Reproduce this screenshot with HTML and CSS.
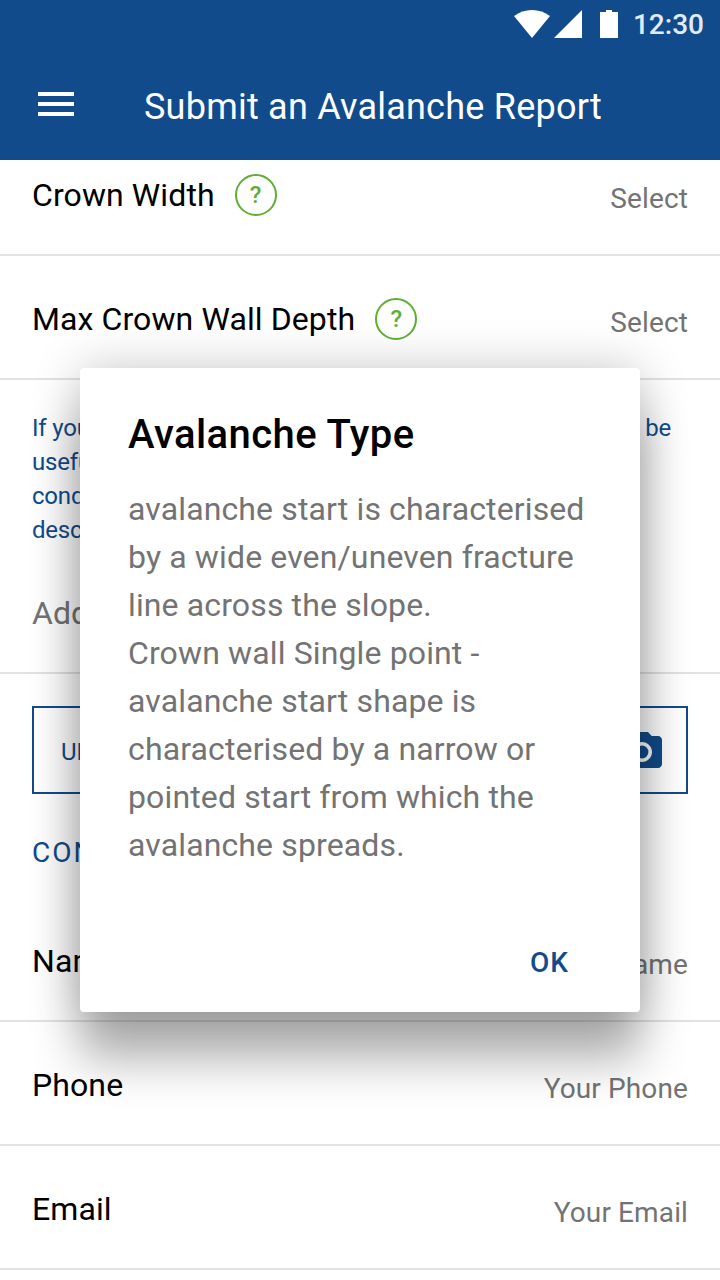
FILE: index.html
```html
<!DOCTYPE html>
<html lang="en">
<head>
<meta charset="utf-8">
<title>Submit an Avalanche Report</title>
<link rel="stylesheet" href="styles.css">
</head>
<body>
<div class="screen">
  <header class="header">
    <div class="status">
      <svg class="status-icons" width="104" height="28" viewBox="0 0 104 28" fill="#fff">
        <path d="M0 6Q8 0 18 0T36 6L18 28Z"/>
        <path d="M68 0V28H40Z"/>
        <path d="M92 0h6v2h6v26H86V2h6Z"/>
      </svg>
      <span class="clock">12:30</span>
    </div>
    <div class="appbar">
      <svg class="menu" width="36" height="24" viewBox="0 0 36 24" fill="#fff">
        <path d="M0 0h36v4H0zM0 10h36v4H0zM0 20h36v4H0z"/>
      </svg>
      <h1 class="title">Submit an Avalanche Report</h1>
    </div>
  </header>
  <main class="form">
    <div class="row row-first"><span class="label">Crown Width</span><span class="help">?</span><span class="value">Select</span></div>
    <div class="row"><span class="label">Max Crown Wall Depth</span><span class="help">?</span><span class="value">Select</span></div>
    <div class="note">
      <div class="hint"><span>If you<br>useful<br>cond<br>desc</span><span class="hint-end">be</span></div>
      <div class="add">Add</div>
    </div>
    <div class="upload">
      <span>UPLOAD</span>
      <svg width="48" height="48" viewBox="0 0 24 24" fill="#114b8b">
        <circle cx="12" cy="12" r="3.2"/>
        <path d="M9 2L7.17 4H4c-1.1 0-2 .9-2 2v12c0 1.1.9 2 2 2h16c1.1 0 2-.9 2-2V6c0-1.1-.9-2-2-2h-3.17L15 2H9zm3 15c-2.76 0-5-2.24-5-5s2.24-5 5-5 5 2.24 5 5-2.24 5-5 5z"/>
      </svg>
    </div>
    <h2 class="section">CONTACT</h2>
    <div class="row"><span class="label">Name</span><span class="value">Your Name</span></div>
    <div class="row"><span class="label">Phone</span><span class="value">Your Phone</span></div>
    <div class="row"><span class="label">Email</span><span class="value">Your Email</span></div>
  </main>
  <div class="dialog" role="dialog">
    <h2 class="dialog-title">Avalanche Type</h2>
    <p class="dialog-text">avalanche start is characterised<br>by a wide even/uneven fracture<br>line across the slope.<br>Crown wall Single point -<br>avalanche start shape is<br>characterised by a narrow or<br>pointed start from which the<br>avalanche spreads.</p>
    <div class="actions"><button class="ok">OK</button></div>
  </div>
</div>
</body>
</html>
```
FILE: styles.css
```css
* { box-sizing: border-box; }
body { margin: 0; font-family: Roboto, sans-serif; background: #fff; }
h1, h2, p { margin: 0; font-weight: 400; }
.screen { position: relative; width: 720px; height: 1280px; overflow: hidden; background: #fff; }

.header { height: 160px; background: #114b8b; color: #fff; }
.status { height: 48px; display: flex; justify-content: flex-end; align-items: center; padding-right: 16px; }
.clock { margin-left: 15px; padding-top: 2px; font-size: 28px; font-weight: 500; line-height: 46px; color: #e1ecfb; }
.appbar { height: 112px; display: flex; align-items: center; padding-left: 38px; }
.menu { margin-right: 70px; }
.title { font-size: 36px; line-height: 48px; letter-spacing: 0.23px; padding-top: 6px; }

.row { height: 124px; display: flex; align-items: center; padding: 4px 32px 0; border-bottom: 2px solid #e2e2e2; }
.row-first { height: 96px; padding: 0 32px 24px; }
.label { font-size: 32px; line-height: 40px; color: #000; letter-spacing: 0.1px; }
.help { width: 42px; height: 42px; margin-left: 20px; border: 2px solid #5fae33; border-radius: 50%; color: #5fae33; font-size: 24px; font-weight: 500; line-height: 38px; text-align: center; }
.value { margin-left: auto; padding-top: 8px; font-size: 28px; line-height: 36px; color: #737373; letter-spacing: 0.12px; }

.note { height: 294px; padding: 31px 32px 0; border-bottom: 2px solid #e2e2e2; }
.hint { display: flex; justify-content: space-between; font-size: 24px; line-height: 34px; letter-spacing: -0.2px; color: #114b8b; }
.hint-end { padding-right: 17px; }
.add { margin-top: 46px; font-size: 32px; line-height: 40px; color: #737373; }
.upload { height: 88px; margin: 32px 32px 0; padding: 4px 20px 0 27px; border: 2px solid #114b8b; display: flex; align-items: center; justify-content: space-between; font-size: 24px; color: #114b8b; }
.section { height: 104px; padding: 41px 32px 0; font-size: 28px; line-height: 36px; letter-spacing: 2px; color: #114b8b; }

.dialog { position: absolute; left: 80px; top: 368px; width: 560px; height: 644px; padding: 41px 48px 23px; background: #fff; border-radius: 4px; box-shadow: 0 0 48px rgba(0, 0, 0, 0.22), 0 48px 48px rgba(0, 0, 0, 0.3); display: flex; flex-direction: column; }
.dialog-title { font-size: 40px; font-weight: 500; line-height: 52px; letter-spacing: 0.42px; color: #000; }
.dialog-text { margin-top: 24px; font-size: 32px; line-height: 48px; letter-spacing: 0.13px; color: #737373; white-space: nowrap; }
.actions { margin-top: auto; display: flex; justify-content: flex-end; padding-right: 23px; }
.ok { padding: 0; border: 0; background: none; font: 500 28px/52px Roboto, sans-serif; letter-spacing: 1px; color: #114b8b; }
```
